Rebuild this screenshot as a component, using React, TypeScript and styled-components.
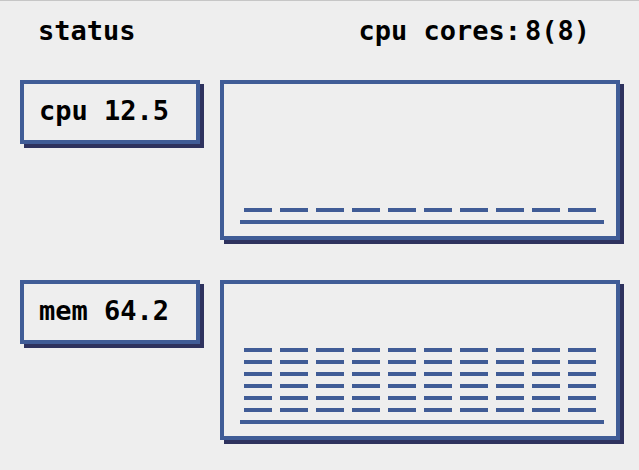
import React from "react";
import styled, { createGlobalStyle } from "styled-components";

const BLUE = "#405c96";
const NAVY = "#2e325e";
const PAPER = "#eeeeee";

const GlobalStyle = createGlobalStyle`
  * { box-sizing: border-box; }
  body {
    margin: 0;
    background: ${PAPER};
    color: #000;
    font-family: "DejaVu Sans Mono", "Liberation Mono", monospace;
    font-size: 27px;
    font-weight: 700;
    line-height: 32px;
  }
`;

const Page = styled.main`
  min-height: 100vh;
  padding: 14px 19px 20px 20px;
  border-top: 1px solid #c6c6c6;
`;

const Header = styled.header`
  display: flex;
  justify-content: space-between;
  padding: 0 30px 0 18px;
  margin-bottom: 33px;
`;

const Title = styled.h1`
  margin: 0;
  font: inherit;
`;

const Cores = styled.p`
  display: flex;
  gap: 4px;
  margin: 0;
`;

const Monitors = styled.div`
  display: grid;
  gap: 40px;
`;

const Monitor = styled.section`
  display: grid;
  grid-template-columns: 180px 1fr;
  align-items: start;
  gap: 20px;
`;

const Panel = styled.div`
  border: 4px solid ${BLUE};
  box-shadow: 4px 4px 0 ${NAVY};
`;

const Reading = styled(Panel)`
  padding: 11px 15px 13px;
  white-space: pre;
`;

const ChartPanel = styled(Panel)`
  display: flex;
  height: 160px;
  padding: 12px 12px 12px 16px;
`;

const Chart = styled.div`
  flex: 1;
  display: flex;
  align-items: flex-end;
  gap: 8px;
  padding: 0 8px 8px 4px;
  border-bottom: 4px solid ${BLUE};
`;

const Column = styled.div`
  flex: 1;
  display: grid;
  gap: 8px;
`;

const Dash = styled.div`
  height: 4px;
  background: ${BLUE};
`;

type Usage = { name: string; value: string; history: number[] };

const usages: Usage[] = [
  { name: "cpu", value: "12.5", history: Array(10).fill(1) },
  { name: "mem", value: "64.2", history: Array(10).fill(6) },
];

export default function App() {
  return (
    <>
      <GlobalStyle />
      <Page>
        <Header>
          <Title>status</Title>
          <Cores>
            <span>cpu cores:</span>
            <span>8(8)</span>
          </Cores>
        </Header>
        <Monitors>
          {usages.map(({ name, value, history }) => (
            <Monitor key={name}>
              <Reading>{`${name} ${value}`}</Reading>
              <ChartPanel>
                <Chart role="img" aria-label={`${name} history`}>
                  {history.map((level, i) => (
                    <Column key={i}>
                      {Array.from({ length: level }, (_, n) => (
                        <Dash key={n} />
                      ))}
                    </Column>
                  ))}
                </Chart>
              </ChartPanel>
            </Monitor>
          ))}
        </Monitors>
      </Page>
    </>
  );
}
